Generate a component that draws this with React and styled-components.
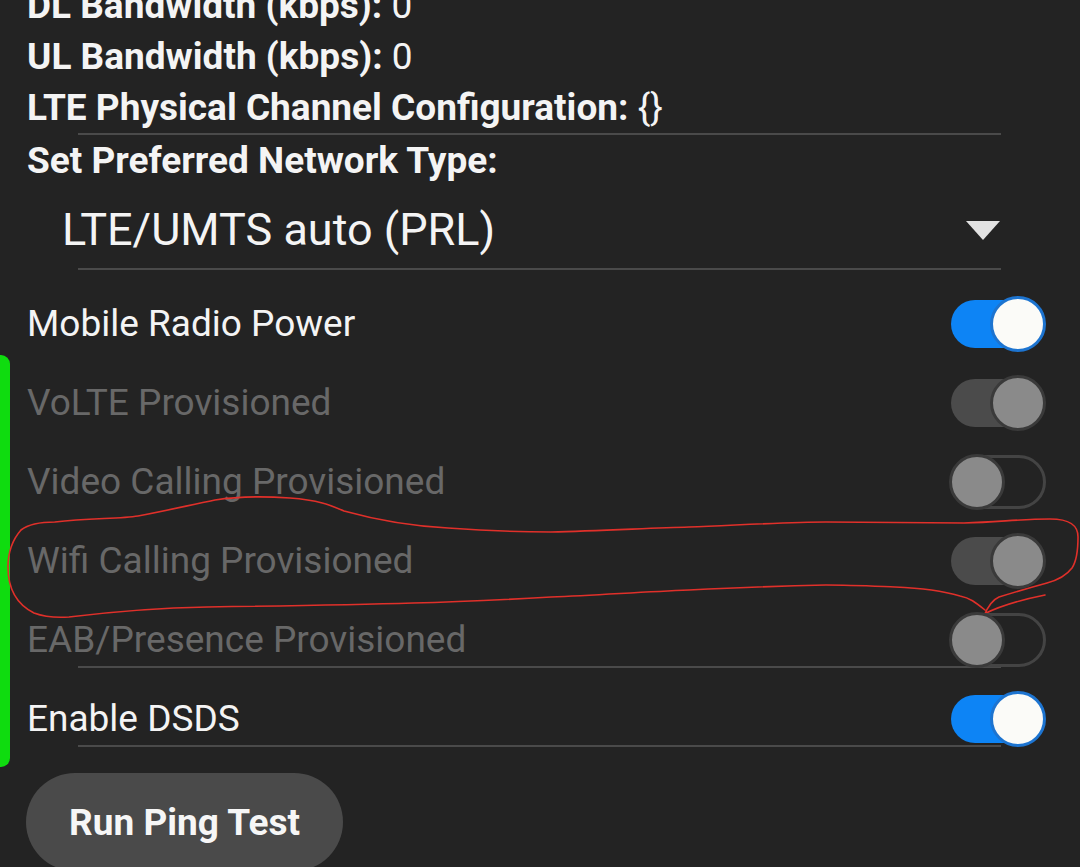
import React from 'react';
import styled, { createGlobalStyle, css } from 'styled-components';

const GlobalStyle = createGlobalStyle`
  html, body {
    margin: 0;
    padding: 0;
    background: #232323;
    height: 867px;
    overflow: hidden;
  }
  body {
    font-family: Roboto, 'Noto Sans', sans-serif;
    color: #f2f2f2;
  }
`;

const info = [
  { label: 'DL Bandwidth (kbps):', value: '0' },
  { label: 'UL Bandwidth (kbps):', value: '0' },
  { label: 'LTE Physical Channel Configuration:', value: '{}' },
];

const toggles = [
  { label: 'Mobile Radio Power', on: true, enabled: true },
  { label: 'VoLTE Provisioned', on: true, enabled: false },
  { label: 'Video Calling Provisioned', on: false, enabled: false },
  { label: 'Wifi Calling Provisioned', on: true, enabled: false },
  { label: 'EAB/Presence Provisioned', on: false, enabled: false, divider: true },
  { label: 'Enable DSDS', on: true, enabled: true, divider: true },
];

const Switch = ({ on, enabled }) => (
  <SwitchBox>
    <Track $on={on} $enabled={enabled} />
    <Thumb $on={on} $enabled={enabled} />
  </SwitchBox>
);

const App = () => {
  return (
    <Screen>
      <GlobalStyle />
      <EdgeBar />
      <Content>
        {info.map((row) => (
          <InfoLine key={row.label}>
            <b>{row.label}</b> <span>{row.value}</span>
          </InfoLine>
        ))}
        <Divider />
        <InfoLine>
          <b>Set Preferred Network Type:</b>
        </InfoLine>
        <Spinner>
          <span>LTE/UMTS auto (PRL)</span>
          <Caret />
        </Spinner>
        <Divider />
        <ToggleList>
          {toggles.map((t) => (
            <ToggleRow key={t.label} $divider={t.divider}>
              <ToggleLabel $enabled={t.enabled}>{t.label}</ToggleLabel>
              <Switch on={t.on} enabled={t.enabled} />
            </ToggleRow>
          ))}
        </ToggleList>
        <PingButton type='button'>Run Ping Test</PingButton>
      </Content>
      <Scribble viewBox='0 0 1080 867'>
        <path
          d='M55 522 C90 518 120 519 138 516 C170 510 190 505 215 500 C240 496 262 496 290 498 C318 500 330 505 344 511 C380 521 410 526 448 528 C490 531 520 532 551 532 C600 531 650 528 689 527 C740 525 790 522 826 522 C880 522 930 523 964 523 C1000 522 1020 519 1050 519 C1070 519 1078 525 1078 537 C1078 552 1076 562 1072 568 C1066 576 1058 580 1047 583 C1025 589 1012 593 999 597 C992 600 988 606 984 616 M985 610 C975 602 970 598 960 596 C940 590 920 588 895 587 C870 586 850 585 826 585 C780 586 730 588 689 590 C640 592 600 595 551 597 C500 600 460 602 413 603 C350 605 280 606 207 607 C150 608 110 612 69 617 C55 618 42 616 34 613 C18 605 8 590 8 567 C8 550 14 538 21 530 C30 523 42 522 55 522 M984 614 C1000 606 1020 600 1045 595'
          fill='none'
          stroke='#e0302a'
          strokeWidth='1.6'
          strokeLinecap='round'
        />
      </Scribble>
    </Screen>
  );
};

export default App;

const Screen = styled.div`
  position: relative;
  width: 1080px;
  height: 867px;
  overflow: hidden;
  background: #232323;
`;

const EdgeBar = styled.div`
  position: absolute;
  left: 0;
  top: 355px;
  width: 10px;
  height: 412px;
  background: #0fdc0f;
  border-radius: 0 9px 9px 0;
`;

const Content = styled.div`
  display: flex;
  flex-direction: column;
  margin-top: -20px;
  padding-left: 27px;
  padding-right: 34px;
`;

const InfoLine = styled.div`
  height: 51px;
  line-height: 51px;
  font-size: 37px;
  color: #f4f4f4;
  white-space: nowrap;

  b {
    font-weight: 700;
  }

  span {
    font-weight: 400;
  }
`;

const Divider = styled.div`
  height: 2px;
  margin-left: 51px;
  margin-right: 45px;
  background: #4a4a4a;
`;

const Spinner = styled.div`
  display: flex;
  align-items: center;
  justify-content: space-between;
  height: 78px;
  margin-top: 4px;
  padding-left: 35px;
  padding-right: 46px;
  font-size: 45px;
  color: #f4f4f4;
`;

const Caret = styled.div`
  width: 0;
  height: 0;
  border-left: 17px solid transparent;
  border-right: 17px solid transparent;
  border-top: 19px solid #e2e2e2;
  margin-top: 2px;
`;

const ToggleList = styled.div`
  display: flex;
  flex-direction: column;
  margin-top: 14px;
`;

const ToggleRow = styled.div`
  position: relative;
  display: flex;
  align-items: center;
  justify-content: space-between;
  height: 79px;

  ${({ $divider }) =>
    $divider &&
    css`
      &::after {
        content: '';
        position: absolute;
        left: 51px;
        right: 45px;
        bottom: 11px;
        height: 2px;
        background: #4a4a4a;
      }
    `}
`;

const ToggleLabel = styled.span`
  font-size: 37px;
  color: ${({ $enabled }) => ($enabled ? '#f4f4f4' : '#686868')};
`;

const SwitchBox = styled.div`
  position: relative;
  z-index: 1;
  width: 97px;
  height: 56px;
  flex-shrink: 0;
`;

const Track = styled.div`
  position: absolute;
  left: 2px;
  box-sizing: border-box;
  ${({ $on, $enabled }) =>
    $on
      ? css`
          right: 6px;
          top: 4px;
          height: 48px;
          border-radius: 24px;
          background: ${$enabled ? '#0d84f5' : '#4b4b4b'};
        `
      : css`
          right: 0;
          top: 1px;
          height: 54px;
          border-radius: 27px;
          border: 3px solid #444444;
          background: transparent;
        `}
`;

const Thumb = styled.div`
  position: absolute;
  top: 0;
  width: 56px;
  height: 56px;
  box-sizing: border-box;
  border-radius: 50%;
  ${({ $on }) => ($on ? 'right: 0;' : 'left: 0;')}
  ${({ $enabled }) =>
    $enabled
      ? css`
          background: #fbfbf8;
          border: 3px solid #1d74d0;
        `
      : css`
          background: #8a8a8a;
          border: 3px solid #3a3a3a;
        `}
`;

const PingButton = styled.button`
  align-self: flex-start;
  margin-top: 15px;
  margin-left: -1px;
  width: 317px;
  height: 98px;
  border: none;
  border-radius: 49px;
  background: #4a4a4a;
  color: #f6f6f6;
  font-family: Roboto, 'Noto Sans', sans-serif;
  font-size: 37px;
  font-weight: 700;
`;

const Scribble = styled.svg`
  position: absolute;
  left: 0;
  top: 0;
  width: 1080px;
  height: 867px;
  pointer-events: none;
`;
